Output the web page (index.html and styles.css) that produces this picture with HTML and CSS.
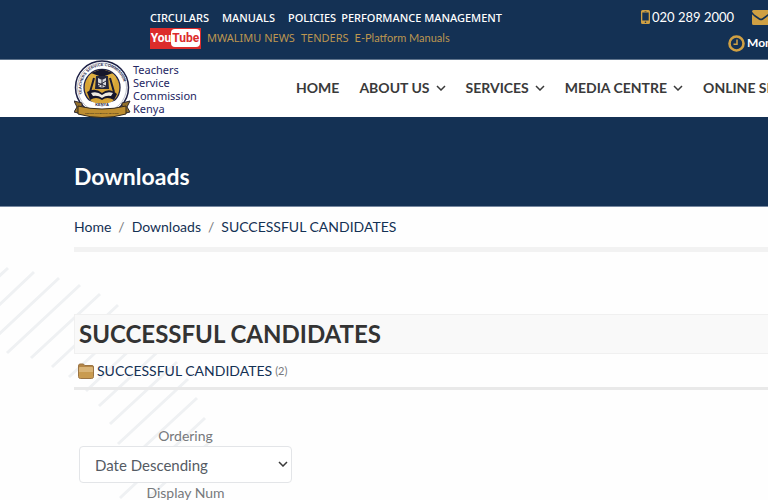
FILE: index.html
```
<!DOCTYPE html>
<html lang="en">
<head>
    <meta charset="UTF-8">
    <meta name="viewport" content="width=device-width, initial-scale=1.0">
    <title>Downloads - Teachers Service Commission</title>
    <link rel="stylesheet" href="styles.css">
</head>
<body>
    <div class="topbar">
        <div class="top-links">
            <div class="link-row main-links">
                <a href="#">CIRCULARS</a>
                <a href="#">MANUALS</a>
                <a href="#">POLICIES</a>
                <a href="#" class="close-link">PERFORMANCE MANAGEMENT</a>
            </div>
            <div class="link-row gold-links">
                <a href="#" class="youtube"><span>You</span><span class="tube">Tube</span></a>
                <a href="#">MWALIMU NEWS</a>
                <a href="#">TENDERS</a>
                <a href="#" class="lato">E-Platform Manuals</a>
            </div>
        </div>
        <div class="top-contact">
            <div class="contact-row">
                <span class="contact-item">
                    <svg width="9" height="14" viewBox="0 0 9 14"><path fill="#d0a043" fill-rule="evenodd" d="M1.5 0h6A1.5 1.5 0 0 1 9 1.5v11A1.5 1.5 0 0 1 7.500 14h-6A1.500 1.500 0 0 1 0 12.500v-11A1.500 1.500 0 0 1 1.500 0zM1.300 2.500v8h6.400v-8zM3.500 1v.6h2V1zM4.500 11.400a.8.8 0 1 0 0 1.600.8.8 0 0 0 0-1.600z"/></svg>
                    020 289 2000
                </span>
                <span class="contact-item">
                    <svg width="18" height="15" viewBox="0 0 18 15"><path fill="#d0a043" d="M0 1.500Q0 0 1.500 0h15Q18 0 18 1.500 17 4 10.500 8 9 9 7.500 8 1 4 0 1.500zM0 4.200q2 2.300 7 5.500 2 1.200 4 0 5-3.200 7-5.500v9.300q0 1.500-1.500 1.500h-15Q0 15 0 13.500z"/></svg>
                </span>
            </div>
            <div class="contact-row hours">
                <span class="contact-item">
                    <svg width="17" height="17" viewBox="0 0 17 17"><circle cx="8.500" cy="8.500" r="7" fill="none" stroke="#d0a043" stroke-width="2.600"/><path d="M9 4.500v4.800H5.500" fill="none" stroke="#d0a043" stroke-width="1.500"/></svg>
                    Mon
                </span>
            </div>
        </div>
    </div>

    <header class="header">
        <a href="#" class="logo">
            <svg width="58" height="58" viewBox="0 0 58 58">
                <defs><path id="ring" d="M8.500 34A21.500 21.500 0 1 1 49.500 34"/></defs>
                <circle cx="28" cy="27.500" r="26.500" fill="#fff" stroke="#1c1f45" stroke-width="1.500"/>
                <circle cx="28" cy="27.500" r="24.500" fill="none" stroke="#777a92" stroke-width=".5"/>
                <text class="seal-text"><textPath href="#ring">TEACHERS SERVICE COMMISSION</textPath></text>
                <circle cx="28" cy="27.500" r="18" fill="#d7a536" stroke="#24264a" stroke-width="1.300"/>
                <path d="M28 10a17.500 17.500 0 0 0-14 7l3 12 11-5 11 5 3-12a17.500 17.500 0 0 0-14-7z" fill="#dfaf40"/>
                <path d="M17 13l11-4 11 4-11 4z" fill="#15162b"/>
                <path d="M22 16h12l1 13H21z" fill="#24263c"/>
                <path d="M24 18l4 2 4-2v8l-4 2-4-2z" fill="#d9dadd"/>
                <path d="M28 20v9M24 23l8 3M32 21l-8 5" stroke="#292a3d"/>
                <path d="M20 18l-4 14M36 18l4 14" stroke="#1b1c30" stroke-width="2"/>
                <path d="M13 32q8-5 15 1 7-6 15 1l-3 6q-7-4-12 0-6-4-12 0z" fill="#15162b"/>
                <path d="M17 33q6-2 11 2 5-4 11-2l-2 3q-5-1-9 2-4-3-9-2z" fill="#eeeae0"/>
                <path d="M13 40q15 7 30 0l-4 6H17z" fill="#fff"/>
                <text x="28" y="46" text-anchor="middle" class="seal-text">KENYA</text>
                <path d="M0 41l8 2v11l-8-2 3-5zM56 41l-8 2v11l8-2-3-5z" fill="#94702a" stroke="#2b2730"/>
                <path d="M4 46q24 6 48 0v8q-24 7-48 0z" fill="#bd8e31" stroke="#33291b"/>
                <text x="28" y="54" text-anchor="middle" class="motto">SERVICE FOR QUALITY TEACHING</text>
            </svg>
            <span class="logo-text">Teachers<br>Service<br>Commission<br>Kenya</span>
        </a>
        <nav class="nav">
            <a href="#">HOME</a>
            <a href="#">ABOUT US <svg class="chev" viewBox="0 0 10 6"><path d="M1 1l4 4 4-4"/></svg></a>
            <a href="#">SERVICES <svg class="chev" viewBox="0 0 10 6"><path d="M1 1l4 4 4-4"/></svg></a>
            <a href="#">MEDIA CENTRE <svg class="chev" viewBox="0 0 10 6"><path d="M1 1l4 4 4-4"/></svg></a>
            <a href="#">ONLINE SERVICES</a>
        </nav>
    </header>

    <section class="hero">
        <h1>Downloads</h1>
    </section>

    <main class="content">
        <svg class="stripes" width="220" height="300" viewBox="0 207 220 300">
            <path d="M-5 280L8 268M-5 309L34 272M-5 338L59 278M7 353L80 285M31 358L100 294M52 367L118 305M69 377L133 318M86 391L147 334M99 406L163 347M110 424L177 362M118 444L188 379M118 471L197 398M120 498L205 418M148 498L212 440"/>
        </svg>
        <nav class="breadcrumb">
            <a href="#">Home</a><span>/</span><a href="#">Downloads</a><span>/</span><a href="#">SUCCESSFUL CANDIDATES</a>
        </nav>
        <h2 class="category-title">SUCCESSFUL CANDIDATES</h2>
        <div class="category">
            <svg width="16" height="16" viewBox="0 0 16 16"><path d="M.5 3Q.5 1 2 1h3.500l1 1.500H14q1.500 0 1.500 1.500v9.500q0 2-2 2h-11q-2 0-2-2z" fill="#b48646" stroke="#9b7444"/><path d="M1 5q0-1 1-1h12q1 0 1 1v7.500H1z" fill="#d9b477"/><path d="M1 9h14v4.500q0 1.500-1.500 1.500h-11Q1 15 1 13.500z" fill="#c99b50"/></svg>
            <a href="#">SUCCESSFUL CANDIDATES</a>
            <small>(2)</small>
        </div>
        <form class="filters">
            <label for="ordering">Ordering</label>
            <div class="select-wrap">
                <select id="ordering">
                    <option>Date Descending</option>
                    <option>Date Ascending</option>
                </select>
                <svg class="chev" viewBox="0 0 10 6"><path d="M1 1l4 4 4-4"/></svg>
            </div>
            <label for="display">Display Num</label>
            <div class="select-wrap">
                <select id="display">
                    <option>20</option>
                    <option>50</option>
                </select>
            </div>
        </form>
    </main>
</body>
</html>
```
FILE: styles.css
```
* {
    margin: 0;
    padding: 0;
    box-sizing: border-box;
}

:root {
    --navy: #143154;
    --grey: #77797c;
    --side: 74px;
}

html {
    overflow: hidden;
}

body {
    height: 100vh;
    overflow: hidden;
    background: #fefefe;
    color: var(--grey);
    font-family: Lato, sans-serif;
    font-size: 14px;
    line-height: 20px;
}

a {
    color: var(--navy);
    text-decoration: none;
}

svg {
    flex: none;
}

/* Top bar */
.topbar {
    display: flex;
    justify-content: space-between;
    height: 60px;
    padding: 8px 0 0 150px;
    background: var(--navy);
    border-bottom: 1px solid #60748c;
    white-space: nowrap;
}

.link-row {
    display: flex;
    align-items: center;
    height: 20px;
    font-family: "Noto Sans", sans-serif;
    font-size: 11px;
}

.main-links {
    gap: 13px;
}

.main-links a {
    color: #fff;
    font-weight: 500;
}

.main-links .close-link {
    margin-left: -8px;
}

.gold-links {
    gap: 6px;
}

.gold-links a {
    color: #bd9650;
}

.gold-links .lato {
    font-family: Lato, sans-serif;
}

.gold-links .youtube {
    display: flex;
    flex: none;
    align-items: center;
    justify-content: center;
    width: 51px;
    height: 21px;
    background: #dc2c2b;
    color: #fff;
    font: bold 12px Roboto, sans-serif;
}

.youtube .tube {
    padding: 2px 1px;
    border-radius: 4px;
    background: #fff;
    color: #dc2c2b;
}

.top-contact {
    width: 127px;
    color: #fff;
    font-size: 13px;
}

.contact-row {
    display: flex;
    gap: 18px;
    height: 18px;
}

.contact-item {
    display: flex;
    align-items: center;
    gap: 2px;
}

.hours {
    height: 34px;
    padding-left: 87px;
    font-size: 12px;
    font-weight: bold;
}

/* Header */
.header {
    display: flex;
    align-items: center;
    height: 57px;
    padding-left: var(--side);
    background: #fff;
    white-space: nowrap;
}

.logo {
    display: flex;
    flex: none;
    align-items: center;
    gap: 1px;
    width: 222px;
}

.logo-text {
    color: #242663;
    font-family: "Noto Sans", sans-serif;
    font-size: 11px;
    line-height: 13px;
}

.seal-text {
    fill: #24264a;
    font: bold 4px "Liberation Sans", sans-serif;
}

.motto {
    fill: #3b2d18;
    font: bold 2px "Liberation Sans", sans-serif;
}

.nav {
    display: flex;
    gap: 20px;
    padding-bottom: 2px;
}

.nav a {
    display: flex;
    align-items: center;
    gap: 6px;
    color: #3a3a3a;
    font-weight: bold;
}

.chev {
    width: 10px;
    height: 6px;
    fill: none;
    stroke: #3a3a3a;
    stroke-width: 1.5;
}

/* Page title */
.hero {
    height: 90px;
    padding: 43px 0 0 var(--side);
    background: var(--navy);
    border-bottom: 1px solid #7788a0;
}

.hero h1 {
    color: #fff;
    font-size: 23px;
    line-height: 32px;
}

/* Content */
.content {
    position: relative;
    padding-left: var(--side);
}

.stripes {
    position: absolute;
    top: 0;
    left: 0;
    z-index: -1;
    stroke: #eff1f3;
    stroke-width: 3;
}

.breadcrumb {
    padding: 10px 0;
    border-bottom: 5px solid #f2f2f2;
}

.breadcrumb span {
    margin: 0 7px;
}

.category-title {
    margin-top: 62px;
    padding: 0 4px;
    background: #f9f9f9;
    border: 1px solid #f0f0f0;
    border-right: 0;
    color: #333;
    font-size: 24px;
    line-height: 38px;
}

.category {
    display: flex;
    align-items: center;
    gap: 3px;
    padding: 7px 4px 6px;
    border-bottom: 3px solid #e9e9e9;
}

.category small {
    font-size: 11px;
}

.filters {
    display: flex;
    flex-direction: column;
    width: 223px;
    margin-top: 36px;
    padding: 0 5px;
}

.filters label {
    text-align: center;
}

.select-wrap {
    position: relative;
}

.select-wrap select {
    width: 100%;
    height: 37px;
    padding: 0 15px;
    appearance: none;
    background: #fff;
    border: 1px solid #e3e5e8;
    border-radius: 4px;
    color: #555b64;
    font: 15px Lato, sans-serif;
}

.select-wrap .chev {
    position: absolute;
    top: 15px;
    right: 4px;
}
```
